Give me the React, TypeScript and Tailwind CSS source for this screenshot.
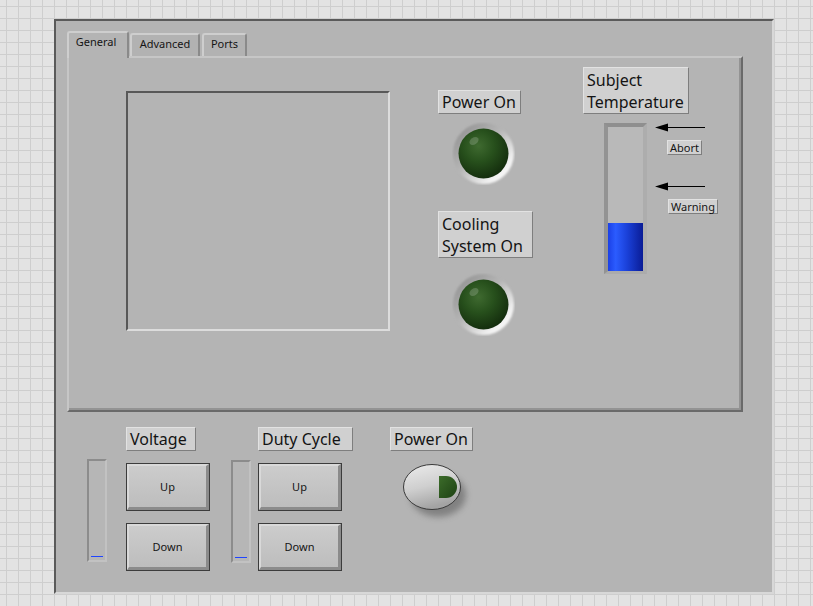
import React, { useId } from 'react';

const labelBorder =
  "border border-t-[#e2e2e2] border-l-[#e2e2e2] border-r-[#7e7e7e] border-b-[#7e7e7e] bg-[#d0d0d0] text-[#141414]";

const Label: React.FC<{ children: React.ReactNode; className?: string }> = ({ children, className = "" }) => (
    <div className={`${labelBorder} px-[3px] text-[16px] leading-[22px] ${className}`}>{children}</div>
);

const SmallLabel: React.FC<{ children: React.ReactNode; className?: string }> = ({ children, className = "" }) => (
    <div className={`${labelBorder} w-fit px-[2px] text-[11px] leading-[13px] ${className}`}>{children}</div>
);

const Led: React.FC<{ className?: string }> = ({ className = "" }) => {
    const id = useId().replace(/:/g, "");
    return (
        <svg width="63" height="63" viewBox="0 0 63 63" className={className}>
            <defs>
                <linearGradient id={`bz${id}`} x1="0" y1="0" x2="1" y2="1">
                    <stop offset="0" stopColor="#8a8a8a" />
                    <stop offset="0.45" stopColor="#b6b6b6" />
                    <stop offset="0.78" stopColor="#f2f2f2" />
                    <stop offset="1" stopColor="#ffffff" />
                </linearGradient>
                <radialGradient id={`gr${id}`} cx="0.4" cy="0.35" r="0.7">
                    <stop offset="0" stopColor="#3f6a30" />
                    <stop offset="0.45" stopColor="#27501c" />
                    <stop offset="1" stopColor="#122a0c" />
                </radialGradient>
                <filter id={`bl${id}`} x="-20%" y="-20%" width="140%" height="140%">
                    <feGaussianBlur stdDeviation="1" />
                </filter>
            </defs>
            <circle cx="31.5" cy="31.5" r="30.5" fill={`url(#bz${id})`} filter={`url(#bl${id})`} />
            <circle cx="31.5" cy="31.5" r="25" fill={`url(#gr${id})`} />
            <ellipse cx="22" cy="19" rx="5" ry="3.5" fill="#ffffff" opacity="0.18" transform="rotate(-35 22 19)" />
        </svg>
    );
};

const Arrow: React.FC<{ className?: string }> = ({ className = "" }) => (
    <svg width="50" height="10" viewBox="0 0 50 10" className={className}>
        <line x1="8" y1="4.5" x2="50" y2="4.5" stroke="#000" strokeWidth="1" />
        <path d="M0 4.5 L13 0.5 L13 8.5 Z" fill="#000" />
    </svg>
);

const PanelButton: React.FC<{ text: string; className?: string }> = ({ text, className = "" }) => (
    <div className={`h-[48px] w-[84px] border border-[#3c3c3c] ${className}`}>
        <div className="flex h-full w-full items-center justify-center border-t-2 border-l-2 border-r-[3px] border-b-[3px] border-t-[#d9d9d9] border-l-[#d9d9d9] border-r-[#8b8b8b] border-b-[#8b8b8b] bg-[linear-gradient(to_bottom,#cccccc,#bdbdbd)] pt-[2px] text-[11px] text-[#151515]">
            {text}
        </div>
    </div>
);

const SlideBar: React.FC<{ className?: string }> = ({ className = "" }) => (
    <div className={`flex h-[103px] w-[20px] flex-col justify-end border-2 border-t-[#8c8c8c] border-l-[#8c8c8c] border-r-[#c2c2c2] border-b-[#c2c2c2] bg-[#b6b6b6] px-[2px] pb-[3px] ${className}`}>
        <div className="h-[1px] w-[12px] shrink-0 bg-[#1f45ff]" />
    </div>
);

const Toggle: React.FC<{ className?: string }> = ({ className = "" }) => {
    const id = useId().replace(/:/g, "");
    return (
        <svg width="72" height="62" viewBox="0 0 72 62" className={className}>
            <defs>
                <filter id={`sh${id}`} x="-30%" y="-30%" width="160%" height="160%">
                    <feGaussianBlur stdDeviation="3" />
                </filter>
                <linearGradient id={`bt${id}`} x1="0" y1="0" x2="0.3" y2="1">
                    <stop offset="0" stopColor="#ececec" />
                    <stop offset="0.55" stopColor="#cfcfcf" />
                    <stop offset="1" stopColor="#a4a4a4" />
                </linearGradient>
                <linearGradient id={`gd${id}`} x1="0" y1="0" x2="1" y2="1">
                    <stop offset="0" stopColor="#3c6c2a" />
                    <stop offset="1" stopColor="#1d4113" />
                </linearGradient>
            </defs>
            <ellipse cx="35" cy="31" rx="28" ry="22" fill="#666666" opacity="0.65" filter={`url(#sh${id})`} />
            <ellipse cx="29" cy="23" rx="28.5" ry="22.5" fill={`url(#bt${id})`} stroke="#3a3a3a" strokeWidth="1" />
            <path d="M36 12 H43 A11 11 0 0 1 43 34 H36 Z" fill={`url(#gd${id})`} />
        </svg>
    );
};

export default function App() {
    return (
        <div className="h-[606px] w-[813px] overflow-hidden bg-[#e3e3e3] bg-[linear-gradient(to_right,#cecece_1px,transparent_1px),linear-gradient(to_bottom,#cecece_1px,transparent_1px)] [background-size:12px_12px] [background-position:6px_6px] pl-[54px] pt-[19px] font-['Noto_Sans',sans-serif]">
            <div className="flex h-[575px] w-[720px] flex-col border-2 border-t-[#5a5a5a] border-l-[#5a5a5a] border-r-[#d8d8d8] border-b-[#d8d8d8] bg-[#b4b4b4]">
                {/* tab control */}
                <div className="ml-[11px] mt-[10px]">
                    <div className="flex items-end text-[11px] leading-[14px] text-[#151515]">
                        <div className="relative z-10 -mb-[2px] h-[27px] w-[62px] rounded-t-[3px] border-t-2 border-l-2 border-r-2 border-t-[#cecece] border-l-[#cecece] border-r-[#8a8a8a] bg-[#b4b4b4] pr-[4px] pt-[2px] text-center">
                            General
                        </div>
                        <div className="ml-px h-[23px] w-[70px] rounded-t-[3px] border-t-2 border-l-2 border-r-2 border-t-[#cecece] border-l-[#cecece] border-r-[#8a8a8a] bg-[#b2b2b2] pt-[2px] text-center">
                            Advanced
                        </div>
                        <div className="ml-[2px] h-[23px] w-[45px] rounded-t-[3px] border-t-2 border-l-2 border-r-2 border-t-[#cecece] border-l-[#cecece] border-r-[#8a8a8a] bg-[#b2b2b2] pt-[2px] text-center">
                            Ports
                        </div>
                    </div>
                    <div className="flex h-[356px] w-[676px] items-start border-2 border-t-[#c6c6c6] border-l-[#c6c6c6] border-r-[#6a6a6a] border-b-[#6a6a6a] shadow-[inset_-2px_-2px_0_#939393]">
                        <div className="ml-[57px] mt-[33px] h-[240px] w-[264px] border-2 border-t-[#585858] border-l-[#585858] border-r-[#dcdcdc] border-b-[#dcdcdc]" />

                        <div className="ml-[48px] mt-[32px] flex w-[95px] flex-col">
                            <Label className="w-[83px]">Power On</Label>
                            <Led className="ml-[14px] mt-[8px]" />
                            <Label className="mt-[26px] w-[95px] pt-px">
                                Cooling
                                <br />
                                System On
                            </Label>
                            <Led className="ml-[14px] mt-[15px]" />
                        </div>

                        <div className="ml-[50px] mt-[9px] flex flex-col">
                            <Label className="w-[106px] pt-px">
                                Subject
                                <br />
                                Temperature
                            </Label>
                            <div className="mt-[9px] ml-[21px] flex items-start">
                                <div className="flex h-[151px] w-[43px] flex-col justify-end border-t-4 border-l-4 border-r-4 border-b-[3px] border-t-[#8f8f8f] border-l-[#939393] border-r-[#adadad] border-b-[#ababab] bg-[#b9b9b9]">
                                    <div className="h-[48px] w-full bg-[linear-gradient(to_right,#1b40e6,#2b5cff_22%,#1a40d8_55%,#0a1c96)]" />
                                </div>
                                <div className="ml-[8px] flex flex-col">
                                    <Arrow />
                                    <SmallLabel className="ml-[12px] mt-[7px]">Abort</SmallLabel>
                                    <Arrow className="mt-[27px]" />
                                    <SmallLabel className="ml-[13px] mt-[7px]">Warning</SmallLabel>
                                </div>
                            </div>
                        </div>
                    </div>
                </div>

                {/* bottom controls */}
                <div className="mt-[15px] flex items-start">
                    <SlideBar className="ml-[31px] mt-[32px]" />
                    <div className="ml-[19px] flex flex-col">
                        <Label className="w-[70px]">Voltage</Label>
                        <PanelButton text="Up" className="mt-[12px]" />
                        <PanelButton text="Down" className="mt-[12px]" />
                    </div>
                    <SlideBar className="ml-[21px] mt-[33px]" />
                    <div className="ml-[7px] flex flex-col">
                        <Label className="w-[95px]">Duty Cycle</Label>
                        <PanelButton text="Up" className="mt-[12px]" />
                        <PanelButton text="Down" className="mt-[12px]" />
                    </div>
                    <div className="ml-[37px] flex flex-col">
                        <Label className="w-[83px]">Power On</Label>
                        <Toggle className="ml-[13px] mt-[13px]" />
                    </div>
                </div>
            </div>
        </div>
    );
}
